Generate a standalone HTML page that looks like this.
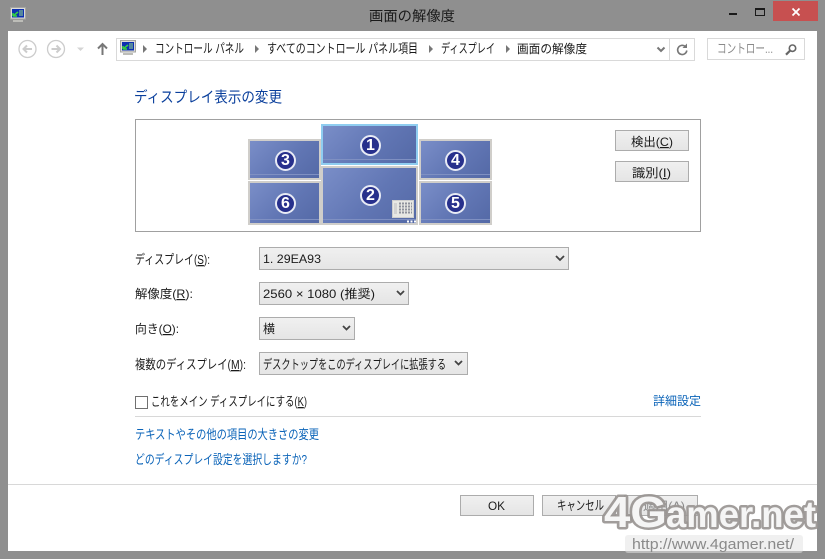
<!DOCTYPE html>
<html><head><meta charset="utf-8">
<style>
html,body{margin:0;padding:0}
body{width:825px;height:559px;overflow:hidden;position:relative;background:#8f8f8f;font-family:"Liberation Sans","Noto Sans CJK JP",sans-serif;font-size:12px;color:#1a1a1a}
.a{position:absolute;white-space:nowrap}
.client{position:absolute;left:8px;top:31px;width:809px;height:520px;background:#fff}
.mon{position:absolute;box-sizing:border-box;border:2px solid #d0ceca;background:linear-gradient(135deg,#7a8ec8 0%,#6176b4 55%,#5469a6 100%)}
.mon:after{content:"";position:absolute;left:0;right:0;bottom:3px;height:1px;background:#7f90c2}
.num{position:absolute;box-sizing:border-box;width:21px;height:21px;border:2px solid #e8ebf5;border-radius:50%;background:#27308c;color:#fff;font:bold 16px/17px "Liberation Sans",sans-serif;text-align:center}
.btn,.sel{position:absolute;box-sizing:border-box;border:1px solid #acacac;background:linear-gradient(#f0f0f0,#e5e5e5)}
svg text{font-family:"Liberation Sans","Noto Sans CJK JP",sans-serif;font-size:12px;fill:#1a1a1a}
svg text.l{fill:#0a63b8}
svg text.k{font-size:13px}
</style></head><body>
<svg class="a" style="left:10px;top:7px" width="16" height="16" viewBox="0 0 16 16"><rect x="0.5" y="0.5" width="15" height="11.500" fill="#dcdcd8" stroke="#a5a5a0"/><rect x="2" y="2" width="12" height="8.500" fill="#0d2fb0"/><path d="M3 9L8 5M3 9h4M3 9V6" stroke="#35d040" stroke-width="1.600" fill="none"/><path d="M9 4h4M9 6h4M9 8h4" stroke="#9fe08a"/><rect x="3" y="13" width="10" height="2" fill="#bdbdb8"/></svg>
<div class="a" style="left:729px;top:13px;width:8px;height:2px;background:#1a1a1a"></div>
<div class="a" style="left:755px;top:8px;width:8px;height:5px;border:1px solid #1a1a1a;border-top-width:2px"></div>
<div class="a" style="left:773px;top:1px;width:45px;height:20px;background:#c75050"></div>
<svg class="a" style="left:791px;top:7px" width="10" height="10" viewBox="0 0 10 10"><path d="M1.500 1.500L8.500 8.500M8.500 1.500L1.500 8.500" stroke="#fff" stroke-width="1.800"/></svg>
<div class="client"></div>

<svg class="a" style="left:18px;top:39px" width="70" height="20" viewBox="0 0 70 20" fill="none" stroke="#cccccc"><circle cx="9.500" cy="10" r="8.500" stroke-width="1.300"/><path d="M14 10H5.500M9 6.500L5.500 10 9 13.500" stroke-width="2"/><circle cx="38" cy="10" r="8.500" stroke-width="1.300"/><path d="M33.500 10H42M38.500 6.500L42 10l-3.500 3.500" stroke-width="2"/><path d="M59 8.500h7l-3.500 3.500z" fill="#d4d4d4" stroke="none"/></svg>
<svg class="a" style="left:97px;top:42px" width="11" height="14" viewBox="0 0 11 14"><path d="M5.500 13V2M1 6.500L5.500 2 10 6.500" stroke="#777" stroke-width="2" fill="none"/></svg>

<div class="a" style="left:116px;top:38px;box-sizing:border-box;width:579px;height:23px;border:1px solid #d9d9d9"></div>
<div class="a" style="left:669px;top:38px;width:1px;height:23px;background:#d9d9d9"></div>
<svg class="a" style="left:120px;top:40px" width="16" height="16" viewBox="0 0 16 16"><rect x="0.500" y="0.500" width="15" height="11.500" fill="#dcdcd8" stroke="#a5a5a0"/><rect x="2" y="2" width="12" height="8.500" fill="#0d2fb0"/><path d="M3 9L8 5M3 9h4M3 9V6" stroke="#35d040" stroke-width="1.600" fill="none"/><path d="M9 4h4M9 6h4M9 8h4" stroke="#9fe08a"/><rect x="3" y="13" width="10" height="2" fill="#bdbdb8"/></svg>
<svg class="a" style="left:143px;top:45px" width="370" height="9" viewBox="0 0 370 9" fill="#777"><path d="M0 0l4 4-4 4zM112 0l4 4-4 4zM286 0l4 4-4 4zM363 0l4 4-4 4z"/></svg>
<svg class="a" style="left:656px;top:46px" width="10" height="8" viewBox="0 0 10 8"><path d="M1.500 1.500L5 5l3.500-3.500" stroke="#777" stroke-width="2" fill="none"/></svg>
<svg class="a" style="left:676px;top:43px" width="13" height="13" viewBox="0 0 13 13"><path d="M10.800 7.500a4.600 4.600 0 1 1-1.500-4" stroke="#777" stroke-width="1.600" fill="none"/><path d="M11 0.500v4.500H6.500z" fill="#777"/></svg>
<div class="a" style="left:707px;top:38px;box-sizing:border-box;width:98px;height:22px;border:1px solid #d9d9d9"></div>
<svg class="a" style="left:785px;top:44px" width="12" height="12" viewBox="0 0 12 12"><circle cx="7.500" cy="4.200" r="3.200" stroke="#666" stroke-width="1.600" fill="none"/><path d="M5.200 6.500L1 10.700" stroke="#666" stroke-width="2.200"/></svg>

<div class="a" style="left:135px;top:119px;box-sizing:border-box;width:566px;height:113px;border:1px solid #a0a0a0"></div>
<div class="mon" style="left:248px;top:139px;width:73px;height:41px"></div>
<div class="mon" style="left:248px;top:181px;width:73px;height:44px"></div>
<div class="mon" style="left:419px;top:139px;width:73px;height:41px"></div>
<div class="mon" style="left:419px;top:181px;width:73px;height:44px"></div>
<div class="mon" style="left:321px;top:124px;width:97px;height:41px;border-color:#8fcdf0"></div>
<div class="mon" style="left:321px;top:166px;width:97px;height:59px"></div>
<div class="num" style="left:275px;top:150px">3</div>
<div class="num" style="left:275px;top:193px">6</div>
<div class="num" style="left:445px;top:150px">4</div>
<div class="num" style="left:445px;top:193px">5</div>
<div class="num" style="left:360px;top:135px">1</div>
<div class="num" style="left:360px;top:185px">2</div>
<svg class="a" style="left:392px;top:200px" width="25" height="23" viewBox="0 0 25 23"><rect x="0.500" y="0.500" width="21" height="17" fill="#e8e8e4" stroke="#cfcfcf"/><path d="M7 3.500h13M7 6.500h13M7 9.500h13M7 12.500h13" stroke="#8f929c" stroke-width="2" stroke-dasharray="2 1"/><rect x="2" y="3" width="3" height="11" fill="#d2d2d2"/><path d="M15 21.500h2M18.500 21.500h2M22 21.500h2" stroke="#fff" stroke-width="2"/></svg>

<div class="btn" style="left:615px;top:130px;width:74px;height:21px"></div>
<div class="btn" style="left:615px;top:161px;width:74px;height:21px"></div>

<div class="sel" style="left:259px;top:247px;width:310px;height:23px"></div>
<div class="sel" style="left:259px;top:282px;width:150px;height:23px"></div>
<div class="sel" style="left:259px;top:317px;width:96px;height:23px"></div>
<div class="sel" style="left:259px;top:352px;width:209px;height:23px"></div>
<svg class="a" style="left:0;top:0" width="825" height="559" viewBox="0 0 825 559" fill="none" stroke="#444" stroke-width="1.800"><path d="M556 256l4 4 4-4M397 291l3.500 3.500 3.500-3.500M343 326l3.500 3.500 3.500-3.500M455 361l3.500 3.500 3.500-3.500"/></svg>

<div class="a" style="left:135px;top:396px;box-sizing:border-box;width:13px;height:13px;border:1px solid #707070;background:#fff"></div>
<div class="a" style="left:135px;top:416px;width:566px;height:1px;background:#d8d8d8"></div>
<div class="a" style="left:8px;top:484px;width:809px;height:1px;background:#d8d8d8"></div>

<div class="btn" style="left:460px;top:495px;width:74px;height:21px"></div>
<div class="btn" style="left:542px;top:495px;width:74px;height:21px"></div>
<div class="btn" style="left:624px;top:495px;width:74px;height:21px"></div>

<svg class="a" style="left:0;top:0" width="825" height="559" viewBox="0 0 825 559">
<text x="369" y="21" style="font-size:14px" textLength="86" lengthAdjust="spacingAndGlyphs">画面の解像度</text>
<text class="k" x="155" y="53" textLength="89" lengthAdjust="spacingAndGlyphs">コントロール パネル</text>
<text class="k" x="267" y="53" textLength="151" lengthAdjust="spacingAndGlyphs">すべてのコントロール パネル項目</text>
<text class="k" x="441" y="53" textLength="54" lengthAdjust="spacingAndGlyphs">ディスプレイ</text>
<text x="517" y="53" textLength="70" lengthAdjust="spacingAndGlyphs">画面の解像度</text>
<text class="k" x="717" y="53" textLength="56" lengthAdjust="spacingAndGlyphs" style="fill:#8a8a8a">コントロー...</text>
<text x="134" y="102" style="font-size:15px;fill:#0a3f9c" textLength="148" lengthAdjust="spacingAndGlyphs">ディスプレイ表示の変更</text>
<text x="631" y="146" textLength="42" lengthAdjust="spacingAndGlyphs">検出(<tspan style="text-decoration:underline">C</tspan>)</text>
<text x="632" y="177" textLength="39" lengthAdjust="spacingAndGlyphs">識別(<tspan style="text-decoration:underline">I</tspan>)</text>
<text class="k" x="135" y="264" textLength="75" lengthAdjust="spacingAndGlyphs">ディスプレイ(<tspan style="text-decoration:underline">S</tspan>):</text>
<text x="263" y="263" textLength="58" lengthAdjust="spacingAndGlyphs">1. 29EA93</text>
<text x="135" y="298" textLength="58" lengthAdjust="spacingAndGlyphs">解像度(<tspan style="text-decoration:underline">R</tspan>):</text>
<text x="263" y="298" textLength="112" lengthAdjust="spacingAndGlyphs">2560 × 1080 (推奨)</text>
<text x="135" y="333" textLength="44" lengthAdjust="spacingAndGlyphs">向き(<tspan style="text-decoration:underline">O</tspan>):</text>
<text x="263" y="333">横</text>
<text class="k" x="135" y="369" textLength="111" lengthAdjust="spacingAndGlyphs">複数のディスプレイ(<tspan style="text-decoration:underline">M</tspan>):</text>
<text class="k" x="263" y="369" textLength="183" lengthAdjust="spacingAndGlyphs">デスクトップをこのディスプレイに拡張する</text>
<text class="k" x="151" y="406" textLength="156" lengthAdjust="spacingAndGlyphs">これをメイン ディスプレイにする(<tspan style="text-decoration:underline">K</tspan>)</text>
<text class="l" x="653" y="405" textLength="48" lengthAdjust="spacingAndGlyphs">詳細設定</text>
<text class="l k" x="135" y="439" textLength="184" lengthAdjust="spacingAndGlyphs">テキストやその他の項目の大きさの変更</text>
<text class="l k" x="135" y="464" textLength="172" lengthAdjust="spacingAndGlyphs">どのディスプレイ設定を選択しますか?</text>
<text x="488" y="510" textLength="17" lengthAdjust="spacingAndGlyphs">OK</text>
<text class="k" x="557" y="510" textLength="47" lengthAdjust="spacingAndGlyphs">キャンセル</text>
<text x="643" y="510" textLength="42" lengthAdjust="spacingAndGlyphs" style="fill:#888">適用(<tspan style="text-decoration:underline">A</tspan>)</text>
</svg>

<svg class="a" style="left:598px;top:490px" width="227" height="69" viewBox="0 0 227 69">
<rect x="27" y="45" width="178" height="18" rx="3" fill="#e4e4e4" opacity=".55"/>
<g stroke="#999592" stroke-opacity=".92" stroke-width="5" stroke-linejoin="round" paint-order="stroke">
<text x="6" y="37" style="font-size:44px;font-weight:bold;fill:#f5f5f5" textLength="63" lengthAdjust="spacingAndGlyphs">4G</text>
<text x="68" y="37" style="font-size:37px;font-weight:bold;fill:#f5f5f5" textLength="150" lengthAdjust="spacingAndGlyphs">amer.net</text>
</g>
<text x="34" y="59" style="font-size:15px;fill:#8a8a8a" textLength="162" lengthAdjust="spacingAndGlyphs">http://www.4gamer.net/</text>
</svg>
</body></html>
